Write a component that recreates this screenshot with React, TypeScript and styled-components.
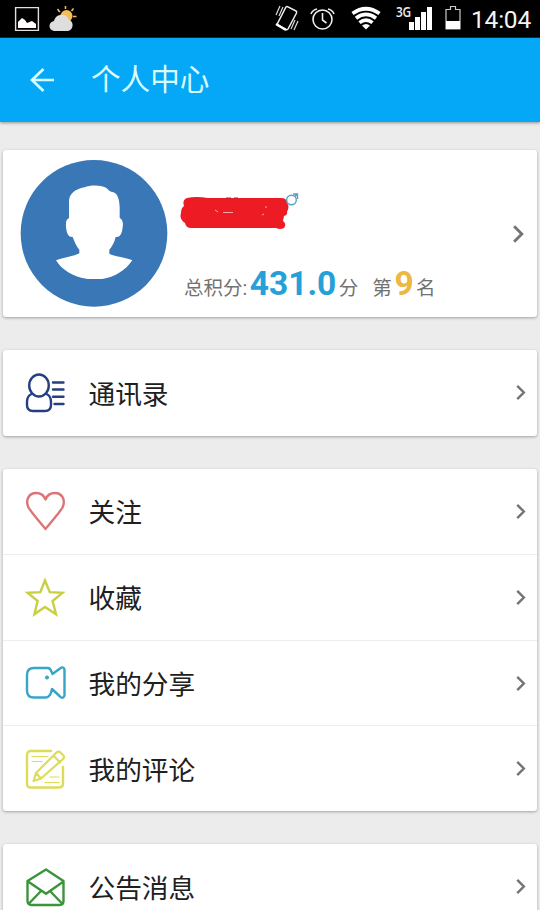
import React from "react";
import styled, { createGlobalStyle } from "styled-components";

const GlobalStyle = createGlobalStyle`
  * { box-sizing: border-box; }
  html, body { margin: 0; padding: 0; background: #ececec; overflow: hidden; }
  body { font-family: Roboto, "Noto Sans CJK SC", sans-serif; }
  svg { display: block; flex: none; overflow: visible; }
`;

const Screen = styled.main`
  width: 540px;
  height: 910px;
  overflow: hidden;
  background: #ececec;
`;

const StatusBar = styled.div`
  height: 38px;
  background: #000;
  border-bottom: 1px solid #04344e;
  display: flex;
  align-items: flex-start;
  justify-content: space-between;
  padding: 0 9px 0 14px;
`;

const StatusGroup = styled.div`
  display: flex;
  align-items: flex-start;
`;

const StatusIcon = styled.svg<{ $gap?: number }>`
  height: 37px;
  margin-right: ${(p) => p.$gap ?? 0}px;
`;

const NetworkLabel = styled.span`
  color: #eee;
  font: 600 14px/14px "Open Sans", sans-serif;
  margin-top: 5px;
  width: 13px;
  letter-spacing: -0.5px;
  transform: scaleX(0.85);
  transform-origin: left;
`;

const Clock = styled.time`
  color: #f4f4f4;
  width: 60px;
  font-size: 24.5px;
  line-height: 39px;
  letter-spacing: -0.2px;
`;

const AppBar = styled.header`
  height: 84px;
  background: #05a8f6;
  box-shadow: 0 1px 3px rgba(0, 0, 0, 0.38);
  display: flex;
  align-items: center;
  padding-left: 29px;
`;

const Title = styled.h1`
  margin: 0 0 0 36px;
  color: #d9fcff;
  font-size: 29.6px;
  font-weight: 400;
  line-height: 40px;
`;

const Content = styled.div`
  padding: 28px 3px 0;
  display: flex;
  flex-direction: column;
  gap: 33px;
`;

const Card = styled.section`
  background: #fff;
  border-radius: 3px;
  box-shadow: 0 1px 3px rgba(0, 0, 0, 0.32);
`;

const ProfileCard = styled(Card)`
  height: 167px;
  display: flex;
  align-items: center;
  padding: 0 13px 0 17px;
`;

const ProfileInfo = styled.div`
  flex: 1;
  height: 147px;
  padding-left: 12px;
  display: flex;
  flex-direction: column;
  justify-content: space-between;
`;

const NameLine = styled.div`
  padding-top: 30px;
`;

const Score = styled.div`
  display: flex;
  align-items: baseline;
  height: 43px;
  padding-left: 4px;
  color: #727272;
  font-size: 19.5px;
  line-height: 40px;
  white-space: pre;
`;

const Figure = styled.strong<{ $color: string }>`
  color: ${(p) => p.$color};
  font-size: 33.5px;
  font-weight: 700;
  margin: 0 2.5px;
`;

const Rank = styled.span`
  margin-left: 14px;
`;

const Row = styled.div`
  height: 85.6px;
  display: flex;
  align-items: center;
  padding: 0 11px 0 22px;
  & + & { border-top: 1px solid #ededed; }
`;

const Label = styled.span`
  flex: 1;
  margin-left: 23.5px;
  color: #202020;
  font-size: 26.7px;
  line-height: 40px;
  padding-top: 4px;
`;

const Chevron = ({ large = false }: { large?: boolean }) => (
  <svg width={large ? 11 : 10} height={large ? 18 : 15} viewBox="0 0 10 16" fill="none" stroke="#747474" strokeWidth="2.6">
    <path d="M1 1l7 7-7 7" />
  </svg>
);

const LineIcon = styled.svg.attrs({ width: 40, height: 40, viewBox: "0 0 40 40" })<{ $color: string }>`
  fill: none;
  stroke: ${(p) => p.$color};
  stroke-width: 2.4;
  stroke-linejoin: round;
  stroke-linecap: round;
`;

const ContactsIcon = () => (
  <LineIcon $color="#263f82">
    <ellipse cx="14" cy="12.5" rx="9.8" ry="11" />
    <path d="M6.500 21C3 22.500 2 25 2 29v3c0 4 2 6 6 6h12c4 0 6-2 6-6v-3c0-4-1-6.500-4.500-8M28 9.500h10.500M28 16.500h10.500M28 23.800h10.500M29.500 31h9" />
  </LineIcon>
);
const HeartIcon = () => (
  <LineIcon $color="#dc7377">
    <path d="M20.500 38C15 31 7 22.500 3.500 16.500C0 9 4 2 11 2c4.500 0 8 2.500 9.500 6.500C22 4.500 25.500 2 30 2c7 0 11 7 7.500 14.500C34 22.500 26 31 20.500 38Z" />
  </LineIcon>
);
const StarIcon = () => (
  <LineIcon $color="#c9cf43">
    <path strokeLinejoin="miter" d="M20 3.500l4.800 11.700 12.700.6-9.900 8.200 3.400 13.300-11-7.400-10.600 7.400 3.200-13.300L2.700 15.800l12.600-.6Z" />
  </LineIcon>
);
const VideoIcon = () => (
  <LineIcon $color="#36a5c7">
    <path d="M9 5h14c3 0 3.500 4 4.500 6L35 5.500c2.500-2 4.500-1 4.500 1.500v25c0 3-2.500 3.500-4.500 1.500L27 26c-1 5-3 8.500-6 8.500H9c-5 0-7-3-7-7V12c0-5 3-7 7-7Z" />
    <circle cx="22" cy="14.500" r="1.600" fill="#36a5c7" strokeWidth="1" />
  </LineIcon>
);
const NoteIcon = () => (
  <LineIcon $color="#dedc57">
    <path d="M26 2H6Q2 2 2 6v29q0 3.500 4 3.500h28q4 0 4-4V18" />
    <path d="M8.500 32l2.500-8L31.500 3.500q2-2 4 0l2.500 2.500q2 2 0 4L16 29.500ZM11 24l5 5.500M28.500 6.500l6.500 7" strokeWidth="2.200" />
    <path d="M7 7.500h16M7 12.500h10M25 28h9M20 33.500h14" strokeWidth="1.200" />
  </LineIcon>
);
const MailIcon = () => (
  <LineIcon $color="#3a943b">
    <path d="M2.500 14L21 2.500 38.500 14v20q0 4-4 4h-28q-4 0-4-4ZM3 14.500l18 12.300 17.500-12.300M3.500 37L16 24M37.500 37L25 24" />
  </LineIcon>
);

const Avatar = () => (
  <svg width="148" height="147" viewBox="60 60 444 441">
    <circle cx="282" cy="280" r="220" fill="#3977b6" />
    <path fill="#fff" d="M207 235V184C207 163 224 147 254 142C270 134 307 134 320 145C326 151 329 155 337 156C352 158 358 176 359 202V234C368 238 370 248 368 262C366 284 358 293 347 291C343 309 335 321 328 329V341C344 350 377 352 397 361C375 393 344 411 307 417H263C218 411 184 388 168 361C186 353 219 350 238 340V329C231 322 225 309 218 291C206 292 200 282 198 261C197 245 199 238 207 235Z" />
  </svg>
);

const HiddenName = () => (
  <svg width="120" height="40" viewBox="180 190 120 40">
    <path fill="#ed1c24" d="M187 198Q196 196 208 198H281Q287 198 287 203Q290 206 287 212Q288 215 284 216L283 221Q287 224 284 228Q280 230 276 228H191Q186 228 185 223Q179 219 181 213Q181 208 184 206Q182 200 187 198Z" />
    <path d="M215 210l3 2M223 212.500h10M262 215l2-1M265 207h2" stroke="#f7a5a8" fill="none" />
    <path d="M226 197.800h5M234 197.800h4" stroke="#4b252b" strokeWidth="0.600" />
    <g fill="none" stroke="#57a1c4" strokeWidth="1.400">
      <circle cx="291.500" cy="200" r="4.800" />
      <path d="M294.500 196.500l3-3M293 194h4.500v5" />
    </g>
  </svg>
);

const interests = [
  { label: "关注", Icon: HeartIcon },
  { label: "收藏", Icon: StarIcon },
  { label: "我的分享", Icon: VideoIcon },
  { label: "我的评论", Icon: NoteIcon },
];

const MenuRow = ({ label, Icon }: { label: string; Icon: React.ComponentType }) => (
  <Row>
    <Icon />
    <Label>{label}</Label>
    <Chevron />
  </Row>
);

export default function App() {
  return (
    <>
      <GlobalStyle />
      <Screen>
        <StatusBar>
          <StatusGroup>
            <StatusIcon width="26" viewBox="14 0 26 37" $gap={9}>
              <path d="M15.600 7.600h22.800v22.800H15.600z" fill="none" stroke="#e4dedd" strokeWidth="1.400" />
              <path d="M18 28v-6l4-4 3 2 2 3 5-2 4 3v4z" fill="#fff" />
            </StatusIcon>
            <StatusIcon width="28" viewBox="49 0 28 37">
              <path d="M65.500 6v3M57.500 9l1.800 2.500M73.500 8.500l-2 2.500M73 16.500h3.500M60 12l-1-1" stroke="#f1b655" strokeWidth="1.600" />
              <circle cx="66.500" cy="16" r="6" fill="#f5bd58" />
              <path d="M54 31C48 30 48 22 54 21C56 13 67 13 69 20C74 21 74 30 68 31Z" fill="#dedede" />
            </StatusIcon>
          </StatusGroup>
          <StatusGroup>
            <StatusIcon width="24" viewBox="275 0 24 37" $gap={11}>
              <path d="M286 7q1-1 2 0l8 4q1 .5.500 2L288 29q-.5 1-2 .500l-8-4q-1-.5-.5-2Z" fill="none" stroke="#eee" strokeWidth="1.500" />
              <path d="M276 24l10 6" stroke="#fff" strokeWidth="2.500" />
              <path d="M276 15l4-9M279 16l4-9M291 29l4-9M294 30l4-9" stroke="#ddd" strokeWidth="1.200" />
            </StatusIcon>
            <StatusIcon width="25" viewBox="310 0 25 37" $gap={16}>
              <g fill="none" stroke="#eee" strokeWidth="1.600">
                <circle cx="322.500" cy="19.500" r="9.500" />
                <path d="M322.500 13v7l4 3M311 14q1.500-4 6-5M334 14q-1.500-4-6-5" />
              </g>
            </StatusIcon>
            <StatusIcon width="30" viewBox="351 0 30 37" $gap={15}>
              <g fill="none" stroke="#fff" strokeWidth="3.700">
                <path d="M352.500 13.500q13.500-9.500 27 0M356 18.200q10-7.500 20 0M359.500 22.600q6.500-5 13 0" />
              </g>
              <path d="M362 25.500q4-3 8 0L366 29.500Z" fill="#fff" />
            </StatusIcon>
            <NetworkLabel>3G</NetworkLabel>
            <StatusIcon width="23" viewBox="409 0 23 37" $gap={13}>
              <path d="M409 22h5v8h-5zM415 17h5v13h-5zM421 12h5v18h-5zM427 7h5v23h-5z" fill="#fff" />
            </StatusIcon>
            <StatusIcon width="17" viewBox="445 0 17 37" $gap={9}>
              <path d="M446 29V9.500h4.500V6.500h5v3h4.500V29Z" fill="none" stroke="#ccc" strokeWidth="1.200" />
              <path d="M446 21h14v8h-14z" fill="#fff" />
            </StatusIcon>
            <Clock>14:04</Clock>
          </StatusGroup>
        </StatusBar>
        <AppBar>
          <svg width="26" height="26" viewBox="0 0 26 26" fill="none" stroke="#d9fcff" strokeWidth="2.700">
            <path d="M14.500 2L3 13 14.500 24M3 13H25" />
          </svg>
          <Title>个人中心</Title>
        </AppBar>
        <Content>
          <ProfileCard>
            <Avatar />
            <ProfileInfo>
              <NameLine><HiddenName /></NameLine>
              <Score>
                总积分:<Figure $color="#25a0d8">431.0</Figure>分
                <Rank>第</Rank><Figure $color="#edb744">9</Figure>名
              </Score>
            </ProfileInfo>
            <Chevron large />
          </ProfileCard>
          <Card><MenuRow label="通讯录" Icon={ContactsIcon} /></Card>
          <Card>{interests.map((item) => <MenuRow key={item.label} {...item} />)}</Card>
          <Card><MenuRow label="公告消息" Icon={MailIcon} /></Card>
        </Content>
      </Screen>
    </>
  );
}
